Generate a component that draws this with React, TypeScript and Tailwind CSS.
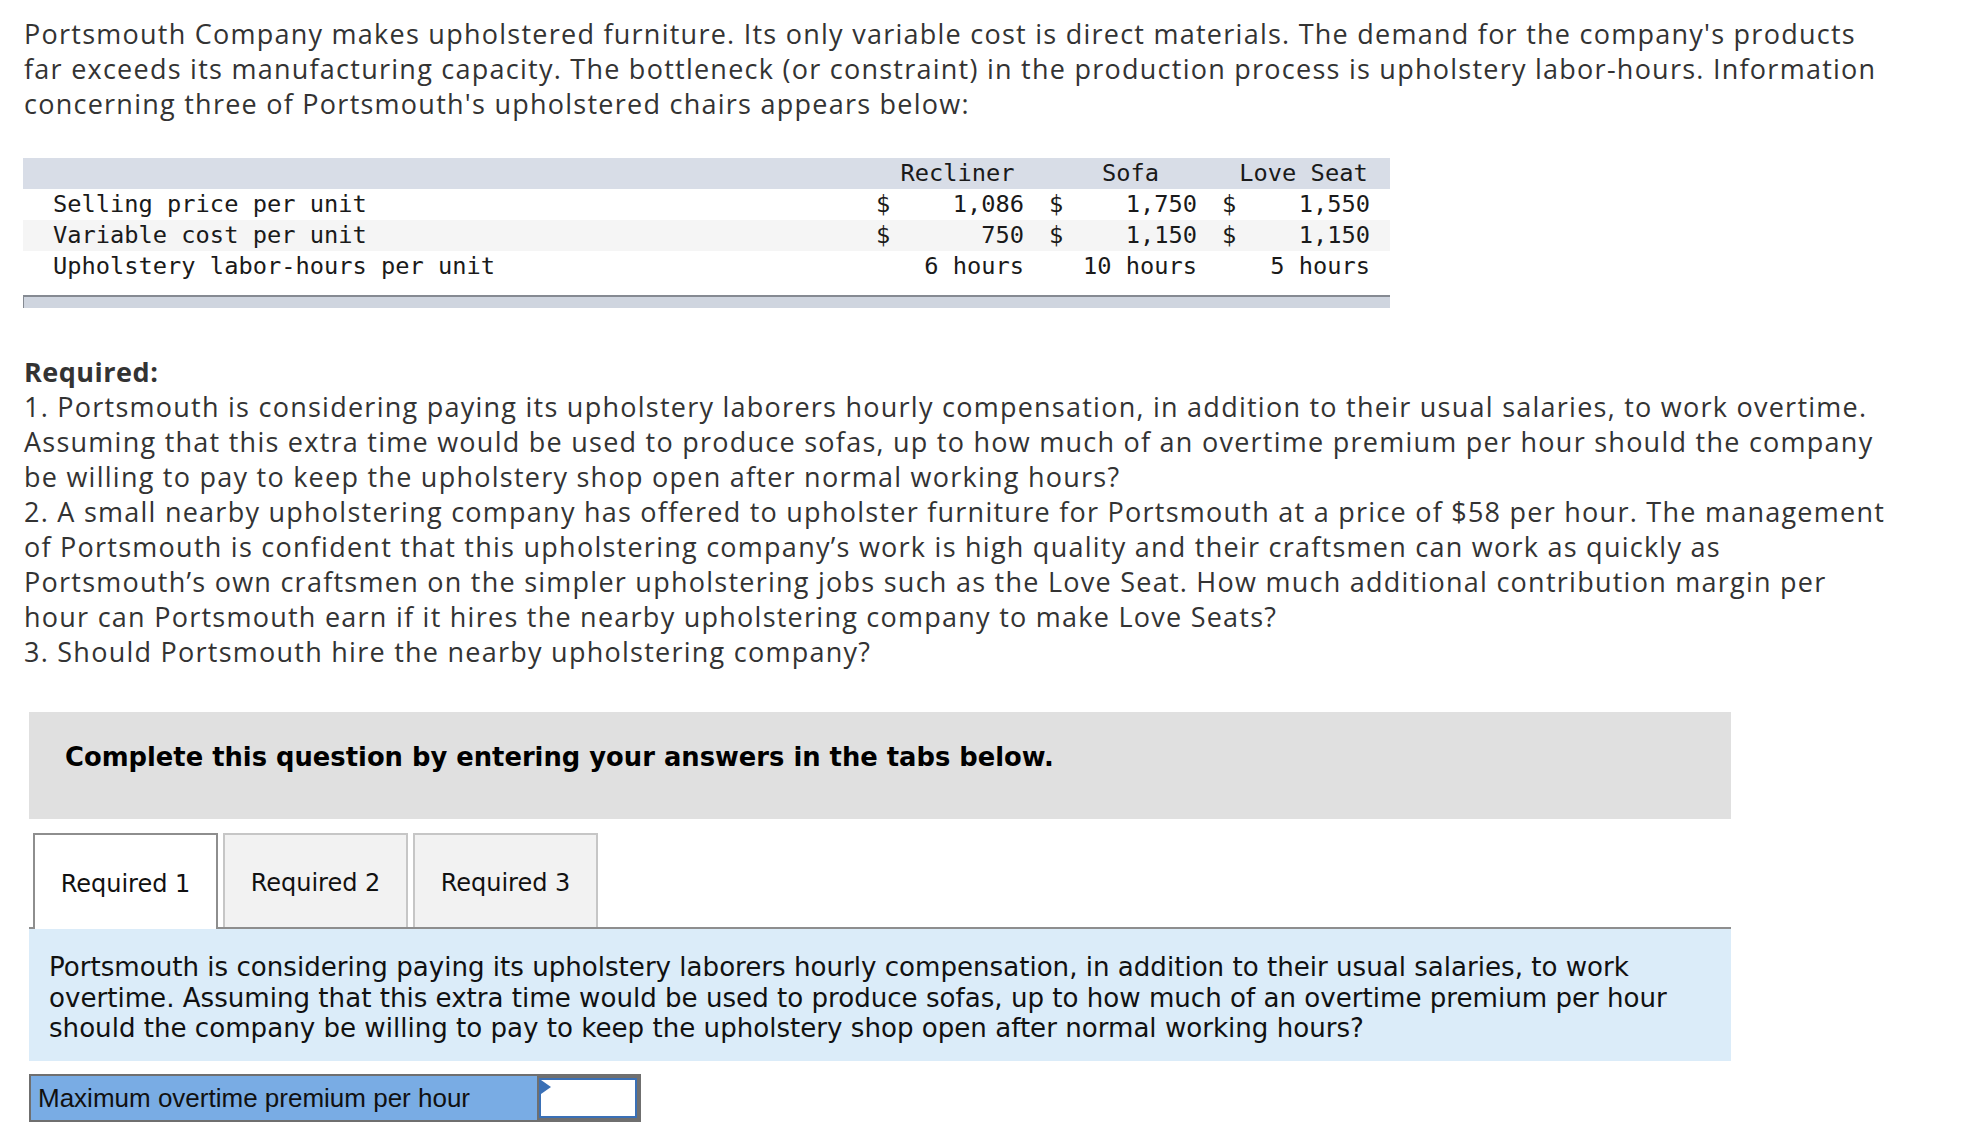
import React from "react";

const intro = [
  "Portsmouth Company makes upholstered furniture. Its only variable cost is direct materials. The demand for the company's products",
  "far exceeds its manufacturing capacity. The bottleneck (or constraint) in the production process is upholstery labor-hours. Information",
  "concerning three of Portsmouth's upholstered chairs appears below:",
];

const req = [
  "1. Portsmouth is considering paying its upholstery laborers hourly compensation, in addition to their usual salaries, to work overtime.",
  "Assuming that this extra time would be used to produce sofas, up to how much of an overtime premium per hour should the company",
  "be willing to pay to keep the upholstery shop open after normal working hours?",
  "2. A small nearby upholstering company has offered to upholster furniture for Portsmouth at a price of $58 per hour. The management",
  "of Portsmouth is confident that this upholstering company\u2019s work is high quality and their craftsmen can work as quickly as",
  "Portsmouth\u2019s own craftsmen on the simpler upholstering jobs such as the Love Seat. How much additional contribution margin per",
  "hour can Portsmouth earn if it hires the nearby upholstering company to make Love Seats?",
  "3. Should Portsmouth hire the nearby upholstering company?",
];

const panel = [
  "Portsmouth is considering paying its upholstery laborers hourly compensation, in addition to their usual salaries, to work",
  "overtime. Assuming that this extra time would be used to produce sofas, up to how much of an overtime premium per hour",
  "should the company be willing to pay to keep the upholstery shop open after normal working hours?",
];

type Row = { label: string; vals: string[]; dollar: boolean; bg: string };
const rows: Row[] = [
  { label: "Selling price per unit", vals: ["1,086", "1,750", "1,550"], dollar: true, bg: "bg-white" },
  { label: "Variable cost per unit", vals: ["750", "1,150", "1,150"], dollar: true, bg: "bg-[#f5f5f5]" },
  { label: "Upholstery labor-hours per unit", vals: ["6 hours", "10 hours", "5 hours"], dollar: false, bg: "bg-white" },
];

const proxima = { fontFamily: "'Open Sans', Lato, sans-serif" };

export default function App() {
  return (
    <div className="w-[1971px] h-[1130px] bg-white text-[#333] overflow-hidden">
      <div className="pl-[24px] pt-[16px] text-[27px] leading-[35px] tracking-[1.25px]" style={proxima}>
        {intro.map((l, i) => (
          <div key={i} className="whitespace-nowrap">{l}</div>
        ))}
      </div>

      {/* data table */}
      <div
        className="ml-[23px] mt-[37px] w-[1367px] text-[23.7px] text-[#1a1a1a]"
        style={{ fontFamily: "'DejaVu Sans Mono', monospace" }}
      >
        <div className="flex h-[31px] items-center bg-[#d8dde7]">
          <div className="w-[848px]" />
          <div className="w-[173px] text-center">Recliner</div>
          <div className="w-[173px] text-center">Sofa</div>
          <div className="w-[173px] text-center">Love Seat</div>
        </div>
        {rows.map((r, i) => (
          <div key={i} className={`flex h-[31px] items-center ${r.bg}`}>
            <div className="w-[848px] pl-[30px]">{r.label}</div>
            {r.vals.map((v, j) => (
              <div key={j} className="w-[173px] flex justify-between pl-[5px] pr-[20px]">
                <span>{r.dollar ? "$" : ""}</span>
                <span>{v}</span>
              </div>
            ))}
          </div>
        ))}
        <div className="mt-[13px] h-[13px] border-t-2 border-l border-[#858a92] bg-[#cfd5df]" />
      </div>

      {/* Required */}
      <div className="pl-[24px] mt-[46px] text-[27px] leading-[35px] tracking-[1.25px]" style={proxima}>
        <div className="font-bold tracking-[0.5px]">Required:</div>
        {req.map((l, i) => (
          <div key={i} className="whitespace-nowrap">{l}</div>
        ))}
      </div>

      {/* Gray instruction box */}
      <div
        className="ml-[29px] mt-[43px] w-[1702px] h-[107px] bg-[#e0e0e0] pl-[36px] pt-[26px] text-[25.8px] font-bold text-black"
        style={{ fontFamily: "'DejaVu Sans', Verdana, sans-serif" }}
      >
        Complete this question by entering your answers in the tabs below.
      </div>

      {/* Tabs */}
      <div
        className="ml-[29px] mt-[14px] w-[1702px]"
        style={{ fontFamily: "'DejaVu Sans', Verdana, sans-serif" }}
      >
        <div className="flex items-end border-b-2 border-[#8e8e8e] pl-[4px] gap-[5px] h-[96px]">
          <div className="w-[185px] h-[96px] -mb-[2px] pt-[4px] border-2 border-b-0 border-[#8e8e8e] bg-white flex items-center justify-center text-[24px] text-[#111]">
            Required 1
          </div>
          <div className="w-[185px] h-[94px] pt-[4px] border-2 border-b-0 border-[#c6c6c6] bg-[#f2f2f2] flex items-center justify-center text-[24px] text-[#111]">
            Required 2
          </div>
          <div className="w-[185px] h-[94px] pt-[4px] border-2 border-b-0 border-[#c6c6c6] bg-[#f2f2f2] flex items-center justify-center text-[24px] text-[#111]">
            Required 3
          </div>
        </div>
        <div className="bg-[#dbecf9] h-[132px] pl-[20px] pt-[23px] text-[26.1px] leading-[30.5px] text-[#111]">
          {panel.map((l, i) => (
            <div key={i} className="whitespace-nowrap">{l}</div>
          ))}
        </div>

        {/* Answer row */}
        <div className="mt-[13px] flex h-[48px] w-[612px]">
          <div
            className="w-[508px] h-full bg-[#79ace4] border-2 border-r-0 border-[#6f6f6f] flex items-center pl-[7px] text-[26px] text-[#111]"
            style={{ fontFamily: "'Liberation Sans', Arial, sans-serif" }}
          >
            Maximum overtime premium per hour
          </div>
          <div className="relative w-[104px] h-full border-2 border-[#6f6f6f] bg-[#6f6f6f] p-[2px] pl-0">
            <div className="relative w-full h-full bg-white border-2 border-[#3a70b6]">
              <svg className="absolute left-0 top-0" width="12" height="14" viewBox="0 0 12 14">
                <polygon points="0,0 10,7 0,14" fill="#3a70b6" />
              </svg>
            </div>
          </div>
        </div>
      </div>
    </div>
  );
}
